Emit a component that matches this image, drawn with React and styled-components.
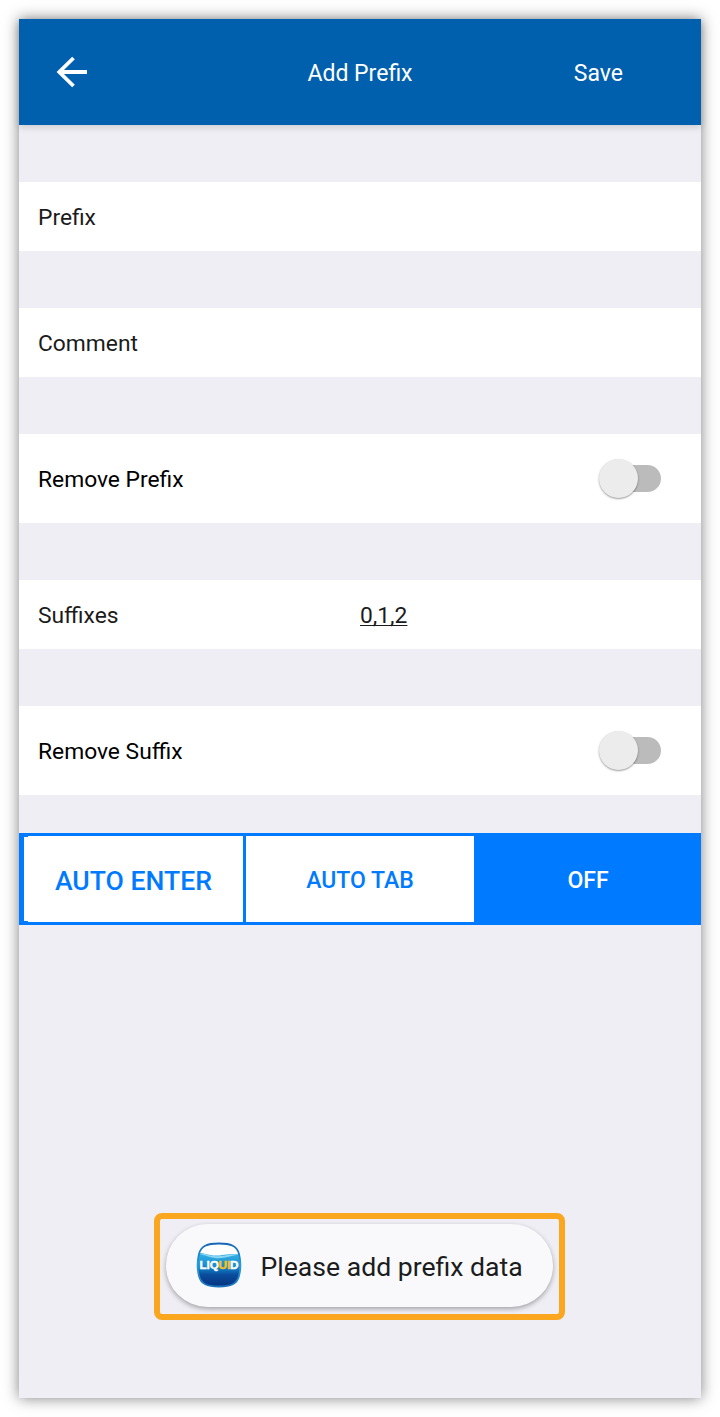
import React, { useState } from "react";
import styled, { createGlobalStyle } from "styled-components";

const segments = [
  { label: "AUTO ENTER", width: 219, size: 26.6 },
  { label: "AUTO TAB", width: 228, size: 23 },
  { label: "OFF", width: 222, size: 23 },
];

const LiquidLogo = () => (
  <LogoSvg viewBox="0 0 46 46">
    <defs>
      <linearGradient id="water" x1="0" y1="0" x2="0" y2="1">
        <stop offset="0" stopColor="#35b5e6" />
        <stop offset="0.4" stopColor="#1487cd" />
        <stop offset="0.62" stopColor="#0a4c9c" />
        <stop offset="1" stopColor="#05307c" />
      </linearGradient>
      <linearGradient id="rim" x1="0" y1="0" x2="0" y2="1">
        <stop offset="0" stopColor="#1767b4" />
        <stop offset="0.5" stopColor="#2a9edb" />
        <stop offset="1" stopColor="#1b72bd" />
      </linearGradient>
      <clipPath id="glass">
        <path d="M23 1.5C35 1.5 41 4 43 12C44.8 19 44.8 27 43 34C41 42 35 44.5 23 44.5S5 42 3 34C1.2 27 1.2 19 3 12C5 4 11 1.5 23 1.5Z" />
      </clipPath>
    </defs>
    <g clipPath="url(#glass)">
      <rect width="46" height="46" fill="#fff" />
      <path
        d="M0 11.5C6 10 10 13 17 13.5C26 14 34 10.5 46 12.5V46H0Z"
        fill="url(#water)"
      />
      <path
        d="M3 12C9 11 13 14 20 14.3C28 14.5 35 11.5 43 12.5C35 14 27 17 19 16C12 15 8 12.5 3 12Z"
        fill="#8ed8f3"
      />
    </g>
    <path
      d="M23 1.5C35 1.5 41 4 43 12C44.8 19 44.8 27 43 34C41 42 35 44.5 23 44.5S5 42 3 34C1.2 27 1.2 19 3 12C5 4 11 1.5 23 1.5Z"
      fill="none"
      stroke="url(#rim)"
      strokeWidth="1.8"
    />
    <LogoText x="3.5" y="26.7" $color="#fff">
      LIQ
    </LogoText>
    <LogoText x="22.6" y="26.7" $color="#fdc016">
      UI
    </LogoText>
    <LogoText x="34" y="26.7" $color="#fff">
      D
    </LogoText>
  </LogoSvg>
);

const App = () => {
  const [removePrefix, setRemovePrefix] = useState(false);
  const [removeSuffix, setRemoveSuffix] = useState(false);
  const [active, setActive] = useState("OFF");

  return (
    <>
      <GlobalStyle />
      <Screen>
        <Header>
          <BackButton aria-label="Back">
            <svg width="32" height="32" viewBox="0 0 32 32">
              <path
                d="M17.5 2L3.300 16L17.5 30M3.300 16H31"
                fill="none"
                stroke="#fff"
                strokeWidth="3.8"
              />
            </svg>
          </BackButton>
          <Title>Add Prefix</Title>
          <SaveButton>Save</SaveButton>
        </Header>
        <Form>
          <Row>
            <Label>Prefix</Label>
          </Row>
          <Row>
            <Label>Comment</Label>
          </Row>
          <Row $tall>
            <Label>Remove Prefix</Label>
            <Switch
              $on={removePrefix}
              aria-label="Remove Prefix"
              onClick={() => setRemovePrefix(!removePrefix)}
            />
          </Row>
          <Row>
            <Label>Suffixes</Label>
            <Value>0,1,2</Value>
          </Row>
          <Row $tall>
            <Label>Remove Suffix</Label>
            <Switch
              $on={removeSuffix}
              aria-label="Remove Suffix"
              onClick={() => setRemoveSuffix(!removeSuffix)}
            />
          </Row>
        </Form>
        <Segments>
          {segments.map(({ label, width, size }) => (
            <Segment
              key={label}
              $width={width}
              $size={size}
              $active={active === label}
              onClick={() => setActive(label)}
            >
              {label}
            </Segment>
          ))}
        </Segments>
        <Highlight>
          <Toast>
            <LiquidLogo />
            <span>Please add prefix data</span>
          </Toast>
        </Highlight>
      </Screen>
    </>
  );
};

const GlobalStyle = createGlobalStyle`
  * {
    box-sizing: border-box;
  }
  body {
    margin: 0;
    background: #fff;
    font-family: Roboto, sans-serif;
  }
  button {
    padding: 0;
    border: none;
    background: none;
    font-family: inherit;
    cursor: pointer;
  }
`;

const Screen = styled.div`
  display: flex;
  flex-direction: column;
  width: 682px;
  height: 1379px;
  margin: 19px;
  background: #efeef4;
  box-shadow: 0 0 14px rgba(0, 0, 0, 0.5);
`;

const Header = styled.header`
  display: grid;
  grid-template-columns: 1fr 1fr 1fr;
  align-items: center;
  height: 106px;
  padding: 0 37px;
  background: #0060ae;
  color: #fff;
  font-size: 23px;
  box-shadow: 0 2px 7px rgba(0, 0, 0, 0.16);
`;

const BackButton = styled.button`
  width: 32px;
  height: 32px;
  svg {
    display: block;
  }
`;

const Title = styled.div`
  text-align: center;
  line-height: 30px;
  padding-top: 4px;
`;

const SaveButton = styled.button`
  justify-self: end;
  padding: 4px 41px 0 0;
  color: #fff;
  font-size: 23px;
  line-height: 30px;
`;

const Form = styled.div`
  display: flex;
  flex-direction: column;
  gap: 57px;
  padding: 57px 0 38px;
`;

const Row = styled.div`
  display: grid;
  grid-template-columns: 322px 1fr;
  align-items: center;
  height: ${({ $tall }) => ($tall ? "89px" : "69px")};
  padding: 2px 40px 0 19px;
  background: #fff;
  color: ${({ $tall }) => ($tall ? "#000" : "#1b1b1b")};
  font-size: 22.8px;
  line-height: 30px;
`;

const Label = styled.div`
  white-space: nowrap;
`;

const Value = styled.div`
  text-decoration: underline;
  text-decoration-thickness: 1px;
  text-underline-offset: 2px;
  text-decoration-skip-ink: none;
`;

const Switch = styled.button`
  display: flex;
  align-items: center;
  justify-self: end;
  flex-direction: ${({ $on }) => ($on ? "row-reverse" : "row")};
  width: 62px;
  height: 40px;
  margin-bottom: 2px;
  /* thumb */
  &::before {
    content: "";
    flex: none;
    width: 39px;
    height: 39px;
    border-radius: 50%;
    background: #ececec;
    box-shadow: 0 1px 2px rgba(0, 0, 0, 0.4);
    z-index: 1;
  }
  /* track, partly under the thumb */
  &::after {
    content: "";
    flex: none;
    width: 43px;
    height: 27px;
    margin: ${({ $on }) => ($on ? "0 -20px 0 0" : "0 0 0 -20px")};
    border-radius: 14px;
    background: #bbb;
  }
`;

const Segments = styled.div`
  display: flex;
  gap: 3px;
  height: 92px;
  padding: 3px 0 3px 5px;
  background: #007aff;
`;

const Segment = styled.button`
  width: ${({ $width }) => $width}px;
  padding-top: 3px;
  background: ${({ $active }) => ($active ? "#007aff" : "#fff")};
  color: ${({ $active }) => ($active ? "#fff" : "#007aff")};
  font-size: ${({ $size }) => $size}px;
  font-weight: 500;
  line-height: 30px;
  /* the group border curls in at the left corners */
  &:first-child {
    background-image: linear-gradient(#007aff, #007aff),
      linear-gradient(#007aff, #007aff);
    background-position: left top, left bottom;
    background-size: 4px 1px;
    background-repeat: no-repeat;
  }
`;

const Highlight = styled.div`
  align-self: center;
  width: 411px;
  height: 107px;
  margin: 288px 2px 0 0;
  padding: 5px 6px;
  border: 6px solid #faa61e;
  border-radius: 8px;
`;

const Toast = styled.div`
  display: flex;
  align-items: center;
  gap: 19px;
  height: 83px;
  padding-left: 30px;
  border-radius: 42px;
  background: #f9f9fc;
  color: #1b1c20;
  font-size: 26.6px;
  line-height: 34px;
  white-space: nowrap;
  box-shadow: 0 2px 5px rgba(0, 0, 0, 0.32);
  span {
    padding-top: 2px;
  }
`;

const LogoSvg = styled.svg`
  width: 46px;
  height: 46px;
  margin-top: -1px;
`;

const LogoText = styled.text`
  font-family: "Liberation Sans", sans-serif;
  font-size: 11.8px;
  font-weight: 700;
  letter-spacing: -0.15px;
  fill: ${({ $color }) => $color};
  stroke: ${({ $color }) => $color};
  stroke-width: 0.4px;
`;

export default App;
